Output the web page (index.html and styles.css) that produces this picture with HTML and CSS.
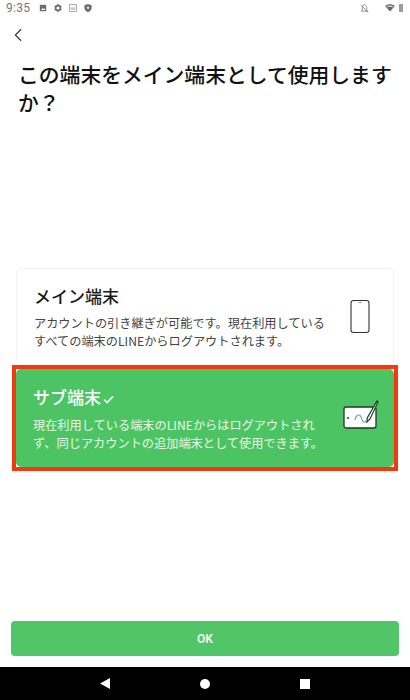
FILE: index.html
```html
<!DOCTYPE html>
<html lang="ja">
<head>
<meta charset="utf-8">
<title>LINE</title>
<link rel="stylesheet" href="styles.css">
</head>
<body>
<div class="screen">
  <div class="status">
    <span class="time">9:35</span>
    <svg class="si" viewBox="0 0 10 10"><path d="M1 1h8v8H1z" fill="#6b6b6b"/><path d="M2.5 7.5l2-2.5 1.2 1.4L6.8 5l1 2.5z" fill="#eee"/></svg>
    <svg class="si" viewBox="0 0 10 10"><circle cx="5" cy="5" r="3" fill="none" stroke="#6b6b6b" stroke-width="2"/><path d="M5 0v2M5 8v2M0.7 2.5l1.7 1M7.6 6.5l1.7 1M0.7 7.5l1.7-1M7.6 3.5l1.7-1" stroke="#6b6b6b" stroke-width="1.6"/></svg>
    <svg class="si" viewBox="0 0 10 10"><rect x="0.5" y="0.5" width="9" height="9" rx="0.5" fill="none" stroke="#8a8a8a"/><path d="M3 4h1.4v3.5H3zM5.6 4H7v3.5H5.6z" fill="#9a9a9a"/></svg>
    <svg class="si" viewBox="0 0 10 10"><path d="M5 0l4.500 1.600v3C9.500 7.300 7.500 9.200 5 10 2.500 9.200.5 7.300.5 4.600v-3z" fill="#6b6b6b"/><circle cx="5" cy="4.600" r="1.600" fill="#ddd"/></svg>
    <span class="grow"></span>
    <svg class="si mute" viewBox="0 0 10 10"><path d="M5 1C3.300 1 2.500 2.300 2.500 4v2.500L1.500 8h7l-1-1.500V4C7.500 2.300 6.700 1 5 1z" fill="none" stroke="#8a8a8a"/><path d="M1 1l8 8.500" stroke="#777" stroke-width="0.9"/></svg>
    <svg class="si wifi" viewBox="0 0 12 10"><path d="M0 2.500C3.300-.5 8.700-.5 12 2.500L6 9.500z" fill="#666"/><path d="M2 3C4.300 1.500 7.700 1.500 10 3L9 4.200C7.300 3.200 4.700 3.200 3 4.200z" fill="#ddd"/></svg>
    <span class="battery"></span>
  </div>
  <div class="back">
    <svg class="chev" viewBox="0 0 9 15"><path d="M8 1L1.500 7.500 8 14" fill="none" stroke="#333" stroke-width="1.300"/></svg>
  </div>
  <h1 class="title">この端末をメイン端末として使用しますか？</h1>
  <div class="options">
    <div class="card">
      <div class="copy">
        <h2 class="name">メイン端末</h2>
        <p class="desc">アカウントの引き継ぎが可能です。現在利用している<br>すべての端末のLINEからログアウトされます。</p>
      </div>
      <svg class="phone" viewBox="0 0 20 34"><rect x="1" y="1" width="18" height="32" rx="2.500" fill="#fff" stroke="#333" stroke-width="1.100"/><path d="M8 3h4" stroke="#aaa"/></svg>
    </div>
    <div class="mark">
      <div class="card selected">
        <div class="copy">
          <h2 class="name">サブ端末<svg class="check" viewBox="0 0 12 10"><path d="M1 5l3.500 3.500L11 1.500" fill="none" stroke="#fff" stroke-width="1.800"/></svg></h2>
          <p class="desc">現在利用している端末のLINEからはログアウトされ<br>ず、同じアカウントの追加端末として使用できます。</p>
        </div>
        <svg class="tablet" viewBox="0 0 36 30"><rect x="1" y="7" width="32" height="21" rx="2" fill="#fff" stroke="#1c3a26" stroke-width="1.300"/><circle cx="5" cy="18" r="1" fill="#333"/><path d="M12 20c1-6 5-6 6-3s2 7 5 4" fill="none" stroke="#5ab5a5" stroke-width="1.200"/><path d="M34 1l1 1-8 17-3 3 .2-4z" fill="#fff" stroke="#1c3a26" stroke-width="1.200"/></svg>
      </div>
    </div>
  </div>
  <div class="footer">
    <button class="ok">OK</button>
  </div>
  <div class="nav">
    <svg class="tri" viewBox="0 0 10 11"><path d="M10 0v11L0 5.500z" fill="#fff"/></svg>
    <span class="dot"></span>
    <span class="sq"></span>
  </div>
</div>
</body>
</html>
```
FILE: styles.css
```css
* { box-sizing: border-box; }
html, body { margin: 0; padding: 0; }
body { font-family: "Noto Sans CJK JP", "Noto Sans", sans-serif; background: #fff; }
.screen { width: 410px; height: 700px; display: flex; flex-direction: column; overflow: hidden; }
.status { height: 18px; flex: none; display: flex; align-items: center; padding: 0 7px 2px 6px; gap: 7px; }
.time { font: 12px/16px Roboto, sans-serif; color: #777; letter-spacing: .3px; margin-right: 2px; }
.si { width: 8px; height: 8px; flex: none; }
.si.wifi { width: 10px; height: 8px; margin-left: 9px; }
.si.mute { width: 9px; height: 9px; }
.battery { width: 4px; height: 8px; background: #9a9a9a; margin-left: -3px; }
.grow { flex: 1; }
.back { height: 30px; flex: none; padding: 10px 0 0 14px; }
.chev { display: block; width: 8px; height: 14px; }
.title { margin: 12px 0 0; padding: 0 16px 0 18px; font-size: 20.800px; line-height: 28px; font-weight: 500; color: #111; }
.options { margin-top: 152px; padding: 0 12px; flex: none; }
.card { margin: 0 4px; height: 97px; border-radius: 5px; border: 1px solid #f3f3f3; display: flex; align-items: center; padding: 0 23px 0 17px; background: #fff; }
.copy { flex: 1; min-width: 0; }
.name { margin: 0; font-size: 17px; line-height: 26px; font-weight: 500; color: #1a1a1a; }
.desc { margin: 5px 0 0; font-size: 12.200px; line-height: 18.500px; color: #444; white-space: nowrap; }
.phone { width: 20px; height: 35px; flex: none; }
.mark { border: 4px solid #f23a12; height: 106px; margin-top: 0; }
.mark .card { margin: 0; height: 98px; border: 0; background: #4dc463; padding: 0 15px 0 17px; }
.selected .name { color: #fff; display: flex; align-items: center; gap: 2px; }
.selected .desc { color: #e8f8eb; margin-top: 6px; }
.check { width: 11px; height: 9px; margin-top: 5px; }
.tablet { width: 36px; height: 30px; flex: none; margin-bottom: 6px; }
.footer { flex: 1; padding: 0 11px 11px; display: flex; align-items: flex-end; }
.ok { width: 100%; height: 35px; border: 0; border-radius: 4px; background: #52c568; color: #e9f8ec; font: 700 12px Roboto, sans-serif; padding: 0; }
.nav { height: 33px; flex: none; background: #000; display: flex; align-items: center; justify-content: center; gap: 90px; }
.tri { width: 10px; height: 11px; }
.dot { width: 10px; height: 10px; border-radius: 50%; background: #fff; }
.sq { width: 10px; height: 10px; background: #fff; }
```
